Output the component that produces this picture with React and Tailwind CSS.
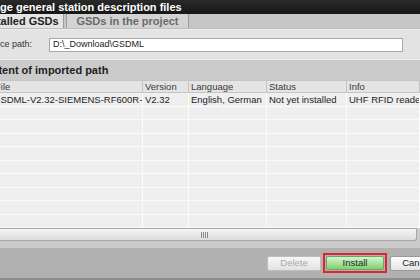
import React from 'react';

const cols = [
  { w: 'w-[143px]', title: 'File', off: '-ml-[7px]' },
  { w: 'w-[46px]', title: 'Version' },
  { w: 'w-[78px]', title: 'Language' },
  { w: 'w-[80px]', title: 'Status' },
  { w: 'flex-1', title: 'Info' },
];

const row = [
  'GSDML-V2.32-SIEMENS-RF600R-20150101.xml',
  'V2.32',
  'English, German',
  'Not yet installed',
  'UHF RFID reader RF600',
];

const App = () => {
  return (
    <div className="w-[420px] h-[280px] overflow-hidden flex flex-col bg-[#b1b1b1] font-['Liberation_Sans',Arial,sans-serif]">
      {/* title bar */}
      <div className="h-[14px] shrink-0 bg-gradient-to-b from-[#2a2a2a] to-[#161616] overflow-hidden flex items-center">
        <span className="-ml-[28px] whitespace-nowrap text-[11px] font-bold text-white leading-none">
          Manage general station description files
        </span>
      </div>

      {/* tabs */}
      <div className="h-[15px] shrink-0 bg-[#c6c6c6] flex border-b border-[#bdbdbd]">
        <div className="w-[64px] bg-[#e4e4e4] overflow-hidden flex items-center border-r border-[#9c9c9c]">
          <span className="-ml-[19px] whitespace-nowrap text-[11px] font-bold text-[#222] leading-none">Installed GSDs</span>
        </div>
        <div className="w-[2px]" />
        <div className="w-[123px] bg-[#d3d3d3] border-l border-r border-[#9c9c9c] flex items-center justify-center">
          <span className="whitespace-nowrap text-[11px] font-bold text-[#6a6a6a] leading-none">GSDs in the project</span>
        </div>
      </div>

      {/* source path */}
      <div className="h-[30px] shrink-0 bg-[#e3e3e3] border-t border-[#ececec] flex items-center overflow-hidden">
        <span className="-ml-[19px] w-[68px] shrink-0 whitespace-nowrap text-[9px] text-[#333]">Source path:</span>
        <div className="w-[354px] h-[14px] bg-white border border-[#a9a9a9] flex items-center pl-[3px]">
          <span className="text-[9px] text-[#222] leading-none">D:\_Download\GSDML</span>
        </div>
      </div>

      {/* section header */}
      <div className="h-[21px] shrink-0 bg-[#cbcbcb] border-t border-[#ededed] flex items-center overflow-hidden">
        <span className="-ml-[23px] whitespace-nowrap text-[11px] font-bold text-[#1e1e1e] leading-none">Content of imported path</span>
      </div>

      {/* table */}
      <div className="h-[148px] shrink-0 bg-[#efefef] flex flex-col overflow-hidden">
        <div className="h-[13px] shrink-0 flex bg-[#e4e4e4] border-t border-b border-[#c4c4c4]">
          {cols.map((c, i) => (
            <div key={i} className={`${c.w} shrink-0 overflow-hidden border-r border-[#c4c4c4] flex items-center pl-[2px]`}>
              <span className={`${c.off || ''} whitespace-nowrap text-[9.5px] text-[#3a3a3a] leading-none`}>{c.title}</span>
            </div>
          ))}
        </div>
        {Array.from({ length: 10 }).map((_, r) => (
          <div key={r} className="h-[13.5px] shrink-0 flex border-b border-[#fbfbfb]">
            {cols.map((c, i) => (
              <div key={i} className={`${c.w} shrink-0 overflow-hidden border-r border-[#fbfbfb] flex items-center pl-[2px]`}>
                {r === 0 && (
                  <span className={`${i === 0 ? '-ml-[9px]' : ''} whitespace-nowrap text-[9.5px] text-[#222] leading-none`}>{row[i]}</span>
                )}
              </div>
            ))}
          </div>
        ))}
      </div>

      {/* horizontal scrollbar */}
      <div className="h-[13px] shrink-0 flex bg-[#cccccc]">
        <div className="w-[417px] h-full bg-gradient-to-b from-[#f6f6f6] to-[#dcdcdc] border-t border-b border-[#a6a6a6] border-r rounded-br-[3px] flex items-center justify-center">
          <div className="flex gap-[1px] h-[6px] -ml-[8px]">
            <div className="w-[1px] bg-[#8a8a8a]" />
            <div className="w-[1px] bg-[#8a8a8a]" />
            <div className="w-[1px] bg-[#8a8a8a]" />
            <div className="w-[1px] bg-[#8a8a8a]" />
          </div>
        </div>
      </div>

      <div className="h-[7px] shrink-0 bg-[#cbcbcb]" />

      {/* bottom buttons */}
      <div className="flex-1 bg-[#b1b1b1] border-b-2 border-[#8c8c8c] flex items-center pl-[267px] gap-[2px]">
        <div className="w-[54px] h-[15px] shrink-0 rounded-[2px] border border-[#bdbdbd] bg-gradient-to-b from-[#f7f7f7] to-[#e2e2e2] flex items-center justify-center">
          <span className="text-[9.5px] text-[#a9a9a9] leading-none">Delete</span>
        </div>
        <div className="w-[64px] h-[20px] shrink-0 border-2 border-[#e3232b] p-[1px] flex">
          <div className="flex-1 rounded-[2px] border border-[#6aa862] bg-gradient-to-b from-[#d4f5cd] to-[#7fd072] flex items-center justify-center">
            <span className="text-[9.5px] text-[#1e2a1e] leading-none">Install</span>
          </div>
        </div>
        <div className="w-[54px] h-[15px] shrink-0 ml-[1px] rounded-[2px] border border-[#9a9a9a] bg-gradient-to-b from-[#fdfdfd] to-[#e4e4e4] flex items-center justify-center">
          <span className="text-[9.5px] text-[#222] leading-none">Cancel</span>
        </div>
      </div>
    </div>
  );
};

export default App;
